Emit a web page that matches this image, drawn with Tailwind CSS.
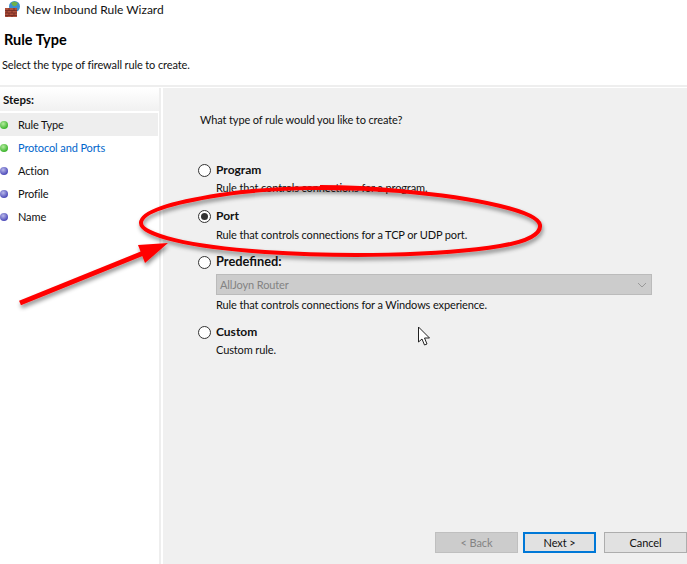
<!DOCTYPE html>
<html lang="en">
    <head>
        <meta charset="UTF-8">
        <title>New Inbound Rule Wizard</title>
        <script src="https://cdn.jsdelivr.net/npm/@tailwindcss/browser@4"></script>
    </head>
    <body class="relative w-[687px] h-[564px] overflow-hidden bg-white font-['Lato','Noto_Sans',sans-serif] text-[11px] tracking-[-0.12px] text-[#111]">
        <!-- Title and page heading -->
        <header class="h-[87px] mb-[1px] border-b-2 border-[#eeeeee]">
            <div class="flex items-center h-5 pl-[5px] gap-[5px] text-[12px] tracking-normal">
                <svg class="-mt-[3px]" width="16" height="16" viewBox="0 0 16 16">
                    <circle cx="9.5" cy="5.5" r="5.5" fill="#3d8fd1"/>
                    <path d="M6 2 Q9 -1 13 2 L11 5 L8 5 Z" fill="#6fb04a"/>
                    <rect x="0" y="7" width="12" height="9.5" fill="#b0503c"/>
                    <path d="M0 9.5 H12 M0 12 H12 M0 14.5 H12 M4 7 V9.5 M9 7 V9.5 M2 9.5 V12 M7 9.5 V12 M4 12 V14.5 M9 12 V14.5 M2 14.5 V16.5 M7 14.5 V16.5" stroke="#6f2a22" stroke-width="0.8"/>
                </svg>
                <span>New Inbound Rule Wizard</span>
            </div>
            <h1 class="mt-[11px] pl-1 font-bold text-[14.5px] leading-[18px] tracking-normal text-black">Rule Type</h1>
            <p class="mt-[8px] pl-[2px] leading-4">Select the type of firewall rule to create.</p>
        </header>

        <div class="flex h-[476px]">
            <!-- Steps -->
            <aside class="w-[161px] border-r-2 border-[#eeeeee]">
                <div class="h-[23px] pl-[3px] flex items-center font-bold text-[11.5px] tracking-normal bg-gradient-to-b from-white to-[#f1f1f1]">Steps:</div>
                <ul class="mt-[2px]">
                    <li class="flex items-center h-[23px] pt-px bg-[#eeeeee] mr-[1px]">
                        <span class="w-[8px] h-[8px] rounded-full bg-[radial-gradient(circle_at_40%_35%,#b5ec9f,#3fb52f_70%)]"></span>
                        <span class="ml-[10px]">Rule Type</span>
                    </li>
                    <li class="flex items-center h-[23px] pt-px text-[#0066cc]">
                        <span class="w-[8px] h-[8px] rounded-full bg-[radial-gradient(circle_at_40%_35%,#b5ec9f,#3fb52f_70%)]"></span>
                        <span class="ml-[10px]">Protocol and Ports</span>
                    </li>
                    <li class="flex items-center h-[23px] pt-px">
                        <span class="w-[8px] h-[8px] rounded-full bg-[radial-gradient(circle_at_40%_35%,#b9b9ea,#4f4dba_70%)]"></span>
                        <span class="ml-[10px]">Action</span>
                    </li>
                    <li class="flex items-center h-[23px] pt-px">
                        <span class="w-[8px] h-[8px] rounded-full bg-[radial-gradient(circle_at_40%_35%,#b9b9ea,#4f4dba_70%)]"></span>
                        <span class="ml-[10px]">Profile</span>
                    </li>
                    <li class="flex items-center h-[23px] pt-px">
                        <span class="w-[8px] h-[8px] rounded-full bg-[radial-gradient(circle_at_40%_35%,#b9b9ea,#4f4dba_70%)]"></span>
                        <span class="ml-[10px]">Name</span>
                    </li>
                </ul>
            </aside>

            <!-- Options -->
            <main class="flex-1 ml-[2px] bg-[#f0f0f0] pl-[35px] pt-[24px] flex flex-col">
                <p class="ml-[2px] leading-4">What type of rule would you like to create?</p>

                <div class="mt-[34px] flex items-center gap-[5px] h-4">
                    <span class="w-[13px] h-[13px] rounded-full border border-[#333] bg-white"></span>
                    <span class="font-bold text-[12px] tracking-normal">Program</span>
                </div>
                <p class="ml-[18px] mt-[2px] leading-4">Rule that controls connections for a program.</p>

                <div class="mt-[12px] flex items-center gap-[5px] h-4">
                    <span class="w-[13px] h-[13px] rounded-full border border-[#333] bg-white flex items-center justify-center">
                        <span class="w-[7px] h-[7px] rounded-full bg-[#333]"></span>
                    </span>
                    <span class="font-bold text-[12px] tracking-normal">Port</span>
                </div>
                <p class="ml-[18px] mt-[3px] leading-4">Rule that controls connections for a TCP or UDP port.</p>

                <div class="mt-[11px] flex items-center gap-[5px] h-4">
                    <span class="w-[13px] h-[13px] rounded-full border border-[#333] bg-white"></span>
                    <span class="font-bold text-[12.8px] tracking-normal">Predefined:</span>
                </div>
                <div class="ml-[18px] mt-[4px] w-[436px] h-[21px] pt-px bg-[#cccccc] border border-[#bbbbbb] flex items-center justify-between pl-[3px] pr-[4px] text-[#838383]">
                    <span>AllJoyn Router</span>
                    <svg width="10" height="6" viewBox="0 0 10 6" fill="none" stroke="#999" stroke-width="1"><path d="M1 1 L5 5 L9 1"/></svg>
                </div>
                <p class="ml-[18px] mt-[2px] leading-4">Rule that controls connections for a Windows experience.</p>

                <div class="mt-[11px] flex items-center gap-[5px] h-4">
                    <span class="w-[13px] h-[13px] rounded-full border border-[#333] bg-white"></span>
                    <span class="font-bold text-[12px] tracking-normal">Custom</span>
                </div>
                <p class="ml-[18px] mt-[2px] leading-4">Custom rule.</p>

                <div class="mt-[174px] -ml-[35px] flex justify-end">
                    <button class="w-[83px] h-[21px] pt-px bg-[#cccccc] border border-[#bfbfbf] text-[#838383]">&lt; Back</button>
                    <button class="ml-[5px] w-[73px] h-[21px] pt-px bg-[#e1e1e1] border-2 border-[#0078d7]">Next &gt;</button>
                    <button class="ml-[8px] w-[83px] h-[21px] pt-px bg-[#e1e1e1] border border-[#adadad]">Cancel</button>
                </div>
            </main>
        </div>

        <!-- Red annotation drawn over the dialog -->
        <svg class="absolute inset-0 pointer-events-none" width="687" height="564" viewBox="0 0 687 564" fill="none">
            <defs>
                <filter id="sh" x="-10%" y="-20%" width="120%" height="150%">
                    <feDropShadow dx="1" dy="3" stdDeviation="2" flood-color="#000" flood-opacity="0.45"/>
                </filter>
            </defs>
            <g filter="url(#sh)">
                <path d="M400 191 C340 186 270 187 220 195 C170 203 141 212 141 223 C141 235 190 247 265 252 C340 257 440 256 500 246 C530 241 541 233 540 225 C538 212 480 198 400 191 C370 188 345 187 320 187" stroke="#ff0000" stroke-width="4"/>
                <path d="M20 303 L146 252" stroke="#ff0000" stroke-width="5"/>
                <path d="M168 243 L138 245 L145 263 Z" fill="#ff0000"/>
            </g>
            <path d="M418.5 327 V342 L422 339 L424.5 345 L427 344 L424.5 338 L429.5 338 Z" fill="#fff" stroke="#222" stroke-width="1"/>
        </svg>
    </body>
</html>
